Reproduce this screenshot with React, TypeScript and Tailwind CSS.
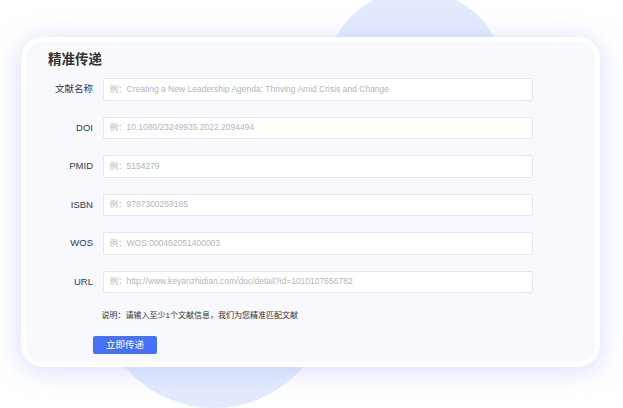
import React from "react";

const rows: { label: string; ph: string }[] = [
  { label: "文献名称", ph: "例：Creating a New Leadership Agenda: Thriving Amid Crisis and Change" },
  { label: "DOI", ph: "例：10.1080/23249935.2022.2094494" },
  { label: "PMID", ph: "例：5154279" },
  { label: "ISBN", ph: "例：9787300259185" },
  { label: "WOS", ph: "例：WOS:000462051400003" },
  { label: "URL", ph: "例：http://www.keyanzhidian.com/doc/detail?id=1010107656782" },
];

export default function App() {
  return (
    <div
      className="relative w-[623px] h-[408px] overflow-hidden bg-white pl-[21px] pt-[37px]"
      style={{ fontFamily: '"Liberation Sans", "Noto Sans CJK SC", sans-serif' }}
    >
      <div className="absolute left-[325px] top-[-10px] w-[180px] h-[180px] rounded-full bg-[#e4eafd]" />
      <div className="absolute left-[97px] top-[174px] w-[234px] h-[234px] rounded-full bg-[#e4eafd]" />
      <div className="relative w-[579px] h-[330px] rounded-[22px] border-[5px] border-white bg-[#f8f9fe] shadow-[0_3px_26px_rgba(170,185,250,0.5)]">
        <div className="ml-[22px] mt-[9px] text-[13.5px] leading-[18px] font-bold text-[#333]">精准传递</div>
        <div className="mt-[9px] flex flex-col gap-[16px]">
          {rows.map((r) => (
            <div key={r.label} className="flex items-center">
              <div className="w-[67px] text-right text-[9.5px] text-[#2e3850]">{r.label}</div>
              <div className="ml-[9.5px] w-[430.5px] h-[22.5px] flex items-center rounded-[2px] border border-[#e6e8ee] bg-white pl-[6px] text-[8.5px] text-[#b3b6bc] whitespace-pre">
                {r.ph}
              </div>
            </div>
          ))}
        </div>
        <div className="ml-[75.5px] mt-[17px] text-[8px] leading-[12px] text-[#333]">说明：请输入至少1个文献信息，我们为您精准匹配文献</div>
        <div className="ml-[67px] mt-[14px] w-[64px] h-[18px] flex items-center justify-center rounded-[2px] bg-[#4671f6] text-[9.5px] text-white">
          立即传递
        </div>
      </div>
    </div>
  );
}
